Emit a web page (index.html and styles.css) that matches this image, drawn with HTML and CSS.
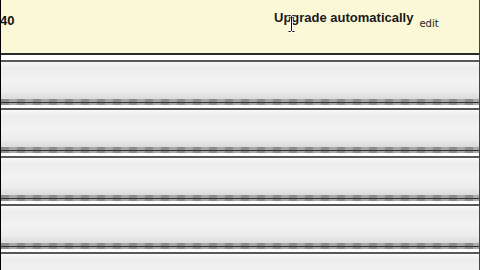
FILE: index.html
```html
<!DOCTYPE html>
<html>
<head>
<meta charset="utf-8">
<link rel="stylesheet" href="styles.css">
</head>
<body>
<div class="frame">
  <div class="header">
    <div class="num">40</div>
    <div class="setting">
      <span class="label">Upgrade automatically</span>
      <span class="edit">edit</span>
    </div>
    <svg class="cursor" width="9" height="19" viewBox="0 0 9 19">
      <path d="M1.5 1.5h2l1 1 1-1h2M4.5 2.5v14M1.5 17.5h2l1-1 1 1h2" fill="none" stroke="#fff" stroke-width="2.5"/>
      <path d="M1.5 1.5h2l1 1 1-1h2M4.5 2.5v14M1.5 17.5h2l1-1 1 1h2" fill="none" stroke="#111" stroke-width="1"/>
    </svg>
  </div>
  <div class="sep"></div>
  <div class="rows">
    <div class="row"><div class="top"></div><div class="body"></div><div class="band"></div><div class="gap"></div></div>
    <div class="row"><div class="top"></div><div class="body"></div><div class="band"></div><div class="gap"></div></div>
    <div class="row"><div class="top"></div><div class="body"></div><div class="band"></div><div class="gap"></div></div>
    <div class="row"><div class="top"></div><div class="body"></div><div class="band"></div><div class="gap"></div></div>
    <div class="row"><div class="top"></div><div class="body"></div><div class="band"></div><div class="gap"></div></div>
  </div>
</div>
</body>
</html>
```
FILE: styles.css
```css
html, body {
  margin: 0;
  padding: 0;
  background: #ffffff;
  overflow: hidden;
}
.frame {
  width: 480px;
  height: 270px;
  box-sizing: border-box;
  border-left: 1px solid #000;
  border-right: 1px solid #444;
  overflow: hidden;
}
.header {
  position: relative;
  height: 53px;
  background: #fbf8d7;
  display: grid;
  grid-template-columns: 273px auto;
  border-bottom: 2px solid #2a2a2a;
}
.num {
  font-family: "Liberation Sans", Arial, sans-serif;
  font-weight: bold;
  font-size: 13px;
  line-height: 15px;
  color: #111;
  padding-top: 13px;
  margin-left: -1px;
}
.setting {
  display: flex;
  align-items: flex-start;
  gap: 6px;
}
.label {
  font-family: "Liberation Sans", Arial, sans-serif;
  font-weight: bold;
  font-size: 13px;
  line-height: 15px;
  color: #1a1a1a;
  margin-top: 10px;
}
.edit {
  font-family: "DejaVu Sans", Verdana, sans-serif;
  font-size: 10px;
  line-height: 12px;
  color: #222;
  margin-top: 18px;
}
.cursor {
  position: absolute;
  left: 286px;
  top: 14px;
}
.sep {
  height: 5px;
  background: #fff;
}
.rows {
  display: flex;
  flex-direction: column;
}
.row {
  display: flex;
  flex-direction: column;
  height: 48px;
  flex: none;
}
.top {
  height: 2px;
  background: #585858;
}
.body {
  height: 37px;
  background: linear-gradient(to bottom, #f8f8f8 0%, #ededed 15%, #f2f2f2 55%, #ebebeb 80%, #dadada 100%);
}
.band {
  height: 6px;
  background:
    linear-gradient(to bottom, transparent 0, transparent 3px, #333 3px, #333 4px, transparent 4px),
    repeating-linear-gradient(to right, #8a8a8a 0, #8a8a8a 8px, #a8a8a8 8px, #a8a8a8 16px);
}
.gap {
  height: 3px;
  background: #fff;
}
```
